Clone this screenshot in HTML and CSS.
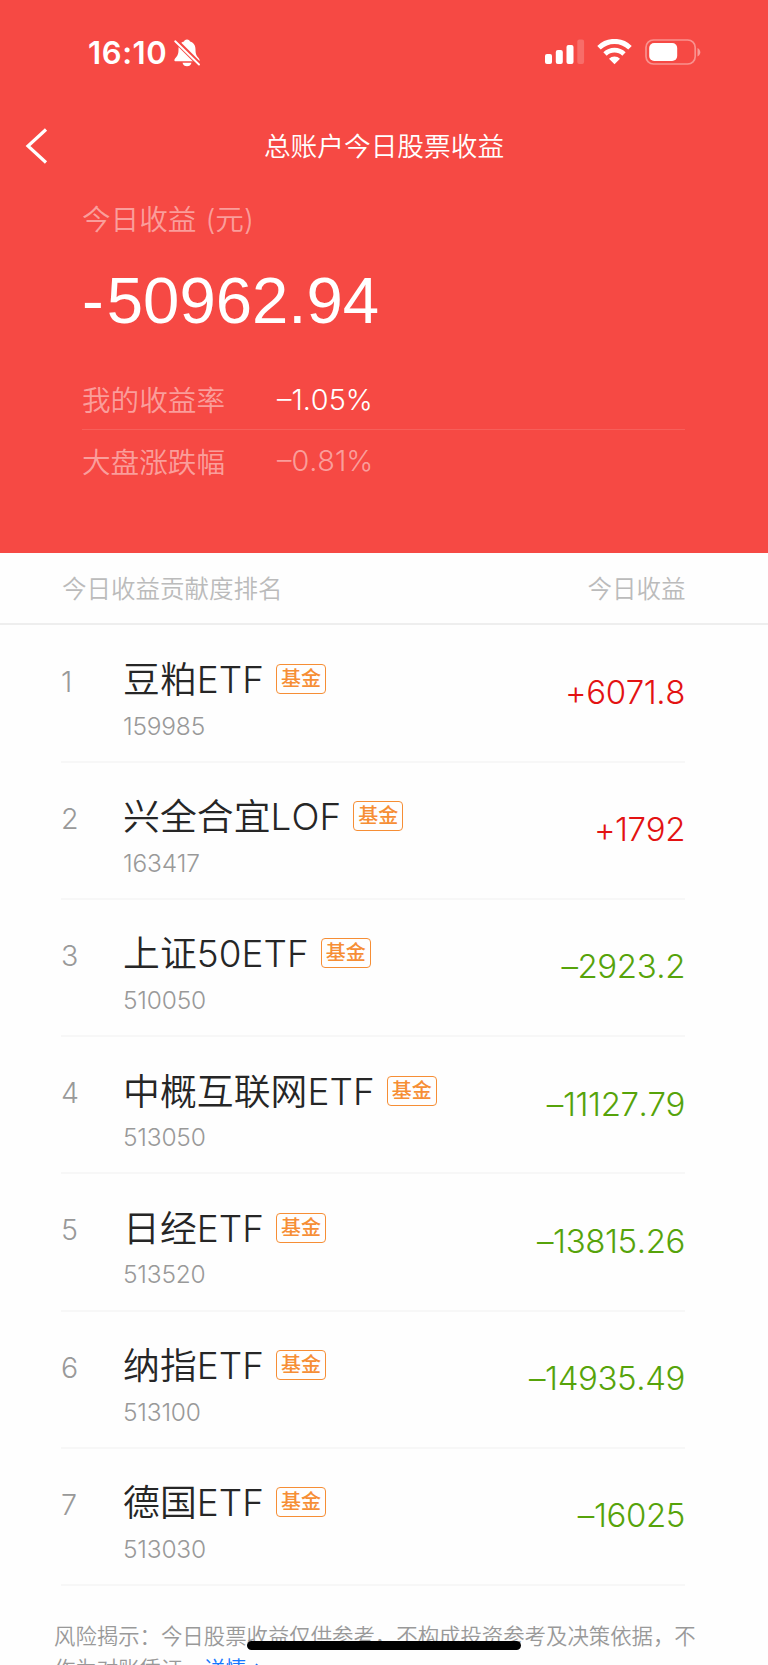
FILE: index.html
```html
<!DOCTYPE html>
<html lang="zh-CN">

<head>
  <meta charset="UTF-8">
  <meta name="viewport" content="width=device-width, initial-scale=1.0">
  <title>总账户今日股票收益</title>
  <link rel="stylesheet" href="styles.css">
</head>

<body>
  <div class="header">
    <div class="status-bar">
      <span class="time">16:10</span>
      <svg class="bell" width="26" height="28" viewBox="0 0 26 28">
        <path d="M13 0.5c-1.9 0-2.7 1-3 2C5.700 3.800 4.500 7 4.500 10.500c0 4.500-1 6.200-2.800 8.200C.6 20 .4 20.500.4 21.300c0 .6.4 1 1.200 1h22.800c.8 0 1.200-.4 1.200-1 0-.8-.4-1.500-1.300-2.600-1.800-2-2.800-3.700-2.800-8.200 0-3.500-1.200-6.700-5.500-8-.3-1-1.100-2-3-2z" fill="#fff" />
        <path d="M8.500 23.700h9c-.6 2.300-2.200 3.600-4.500 3.600s-3.900-1.300-4.500-3.600z" fill="#fff" />
        <path d="M1.500 1.500l24 24" stroke="#f64944" stroke-width="5" />
        <path d="M1.200 2.300l23.800 23.200" stroke="#fff" stroke-width="1.900" stroke-linecap="round" />
      </svg>
      <div class="status-icons">
        <svg width="40" height="26" viewBox="0 0 40 26" fill="#fff">
          <rect x="0" y="15" width="7" height="10" rx="2" />
          <rect x="10.800" y="11" width="7" height="14" rx="2" />
          <rect x="21.500" y="6" width="7" height="19" rx="2" />
          <rect x="32.300" y="0.500" width="6.800" height="24.500" rx="2" opacity="0.2" />
        </svg>
        <svg class="wifi" width="35" height="26" viewBox="0 0 35 26">
          <path d="M2 8.700a22.200 22.200 0 0 1 31 0" fill="none" stroke="#fff" stroke-width="5" />
          <path d="M8 15a13.700 13.700 0 0 1 19 0" fill="none" stroke="#fff" stroke-width="4.800" />
          <path d="M17.500 25.300L12 19.800a7.800 7.800 0 0 1 11 0z" fill="#fff" />
        </svg>
        <svg class="battery" width="56" height="26" viewBox="0 0 56 26">
          <rect x="1" y="1" width="49.200" height="24" rx="7.500" fill="none" stroke="#fff" stroke-width="1.700" opacity="0.4" />
          <rect x="4.200" y="4" width="28" height="18" rx="5" fill="#fff" />
          <path d="M52.500 9v8.500c1.700-.7 2.800-2.400 2.800-4.250S54.200 9.700 52.500 9z" fill="#fff" opacity="0.45" />
        </svg>
      </div>
    </div>

    <div class="nav-bar">
      <svg class="back" width="24" height="38" viewBox="0 0 24 38">
        <path d="M22 2.500L4 19l18 16.500" fill="none" stroke="#fff" stroke-width="3.200" />
      </svg>
      <h1>总账户今日股票收益</h1>
    </div>

    <div class="summary">
      <div class="label">今日收益 (元)</div>
      <div class="total"><span class="minus">-</span>50962.94</div>
      <div class="rate">
        <span class="rate-name">我的收益率</span>
        <span class="rate-value">–1.05%</span>
      </div>
      <div class="rate muted">
        <span class="rate-name">大盘涨跌幅</span>
        <span class="rate-value">–0.81%</span>
      </div>
    </div>
  </div>

  <div class="list-header">
    <span>今日收益贡献度排名</span>
    <span>今日收益</span>
  </div>

  <div class="list">
    <div class="row">
      <span class="rank">1</span>
      <div class="fund">
        <div class="name"><span>豆粕ETF</span><span class="tag">基金</span></div>
        <div class="code">159985</div>
      </div>
      <span class="amount up">+6071.8</span>
    </div>
    <div class="row">
      <span class="rank">2</span>
      <div class="fund">
        <div class="name"><span>兴全合宜LOF</span><span class="tag">基金</span></div>
        <div class="code">163417</div>
      </div>
      <span class="amount up">+1792</span>
    </div>
    <div class="row">
      <span class="rank">3</span>
      <div class="fund">
        <div class="name"><span>上证50ETF</span><span class="tag">基金</span></div>
        <div class="code">510050</div>
      </div>
      <span class="amount down">–2923.2</span>
    </div>
    <div class="row">
      <span class="rank">4</span>
      <div class="fund">
        <div class="name"><span>中概互联网ETF</span><span class="tag">基金</span></div>
        <div class="code">513050</div>
      </div>
      <span class="amount down">–11127.79</span>
    </div>
    <div class="row">
      <span class="rank">5</span>
      <div class="fund">
        <div class="name"><span>日经ETF</span><span class="tag">基金</span></div>
        <div class="code">513520</div>
      </div>
      <span class="amount down">–13815.26</span>
    </div>
    <div class="row">
      <span class="rank">6</span>
      <div class="fund">
        <div class="name"><span>纳指ETF</span><span class="tag">基金</span></div>
        <div class="code">513100</div>
      </div>
      <span class="amount down">–14935.49</span>
    </div>
    <div class="row">
      <span class="rank">7</span>
      <div class="fund">
        <div class="name"><span>德国ETF</span><span class="tag">基金</span></div>
        <div class="code">513030</div>
      </div>
      <span class="amount down">–16025</span>
    </div>
  </div>

  <div class="notice">
    风险揭示：今日股票收益仅供参考，不构成投资参考及决策依据，不作为对账凭证。<a class="more">详情<svg class="arrow" width="7" height="12" viewBox="0 0 7 12"><path d="M1 1l5 5-5 5" fill="none" stroke="currentColor" stroke-width="1.600" /></svg></a>
  </div>

  <div class="home-indicator"></div>
</body>

</html>
```
FILE: styles.css
```css
:root {
  --red: #f64944;
  --up-color: #e31212;
  --down-color: #56a30a;
  --line-color: #f7f7f7;
  --orange: #f68e35;
}

* {
  box-sizing: border-box;
}

body {
  font-family: Inter, 'Noto Sans CJK SC', sans-serif;
  font-weight: 350;
  font-kerning: none;
  margin: 0;
  height: 1665px;
  overflow: hidden;
  background-color: #fefefe;
  color: #262626;
}

.header {
  height: 552.600px;
  background-color: var(--red);
  color: white;
}

.status-bar {
  display: flex;
  height: 103px;
  padding: 0 67px 0 88px;
}

.time {
  width: 86px;
  margin-top: 35px;
  font-size: 31px;
  font-weight: 600;
  line-height: 36px;
  letter-spacing: 0.600px;
}

.bell {
  margin-top: 39px;
}

.status-icons {
  display: flex;
  margin: 39px 0 0 auto;
}

.wifi {
  margin-left: 12px;
}

.battery {
  margin-left: 13px;
}

.nav-bar {
  display: grid;
  grid-template-columns: 60px 1fr 60px;
  align-items: center;
  height: 83px;
}

.back {
  margin: 2px 0 0 24px;
}

.nav-bar h1 {
  margin: 0;
  font-size: 26.700px;
  font-weight: 350;
  text-align: center;
}

.summary {
  padding: 0 83px 0 82px;
}

.label,
.rate-name {
  font-size: 28.600px;
  color: rgba(255, 255, 255, 0.48);
}

.label {
  line-height: 40px;
  margin-top: 14px;
  word-spacing: 1px;
}

.total {
  margin-top: 21px;
  font-family: 'Liberation Sans', Arial, sans-serif;
  font-size: 65.300px;
  font-weight: 400;
  line-height: 80px;
}

.minus {
  margin-right: 3px;
}

.summary .rate {
  display: flex;
  align-items: center;
  height: 60px;
}

.total + .rate {
  margin-top: 27px;
  height: 62px;
  border-bottom: 1px solid rgba(255, 255, 255, 0.12);
}

.rate-name {
  width: 195px;
}

.rate-value {
  padding-top: 1px;
  font-size: 28.800px;
}

.muted .rate-value {
  color: rgba(255, 255, 255, 0.48);
}

.list-header {
  display: flex;
  justify-content: space-between;
  align-items: center;
  height: 72px;
  padding: 0 82.500px 0 62px;
  border-bottom: 2px solid #eee;
  font-size: 24.500px;
  color: #bbb;
}

.list {
  margin: 0 83px 0 61px;
  padding-top: 1px;
}

.row {
  display: flex;
  height: 137.200px;
  border-bottom: 2px solid var(--line-color);
}

.rank {
  width: 62px;
  margin-top: 38px;
  font-size: 28.600px;
  line-height: 36px;
  color: #999;
}

.fund {
  flex: 1;
}

.name {
  display: flex;
  align-items: center;
  height: 44px;
  margin-top: 32.500px;
  font-size: 36.800px;
  line-height: 44px;
  letter-spacing: 0.100px;
}

.tag {
  width: 50px;
  height: 30px;
  margin: -2px 0 0 12px;
  border: 1.500px solid var(--orange);
  border-radius: 4px;
  font-size: 20px;
  font-weight: 500;
  line-height: 28px;
  text-align: center;
  color: var(--orange);
}

.code {
  margin-top: 8.500px;
  font-size: 24.500px;
  line-height: 30px;
  letter-spacing: -0.200px;
  color: #999;
}

.amount {
  margin-top: 46.500px;
  font-size: 33px;
  line-height: 40px;
  letter-spacing: -0.400px;
}

.up {
  color: var(--up-color);
}

.down {
  color: var(--down-color);
}

.notice {
  margin: 34px 70px 0 54px;
  font-size: 21.400px;
  line-height: 33px;
  color: #999;
}

.more {
  color: #1677ff;
}

.arrow {
  margin-left: 8px;
  vertical-align: 2px;
}

.home-indicator {
  position: fixed;
  left: 247px;
  bottom: 15px;
  width: 274px;
  height: 9px;
  border-radius: 5px;
  background-color: #000;
}
```
